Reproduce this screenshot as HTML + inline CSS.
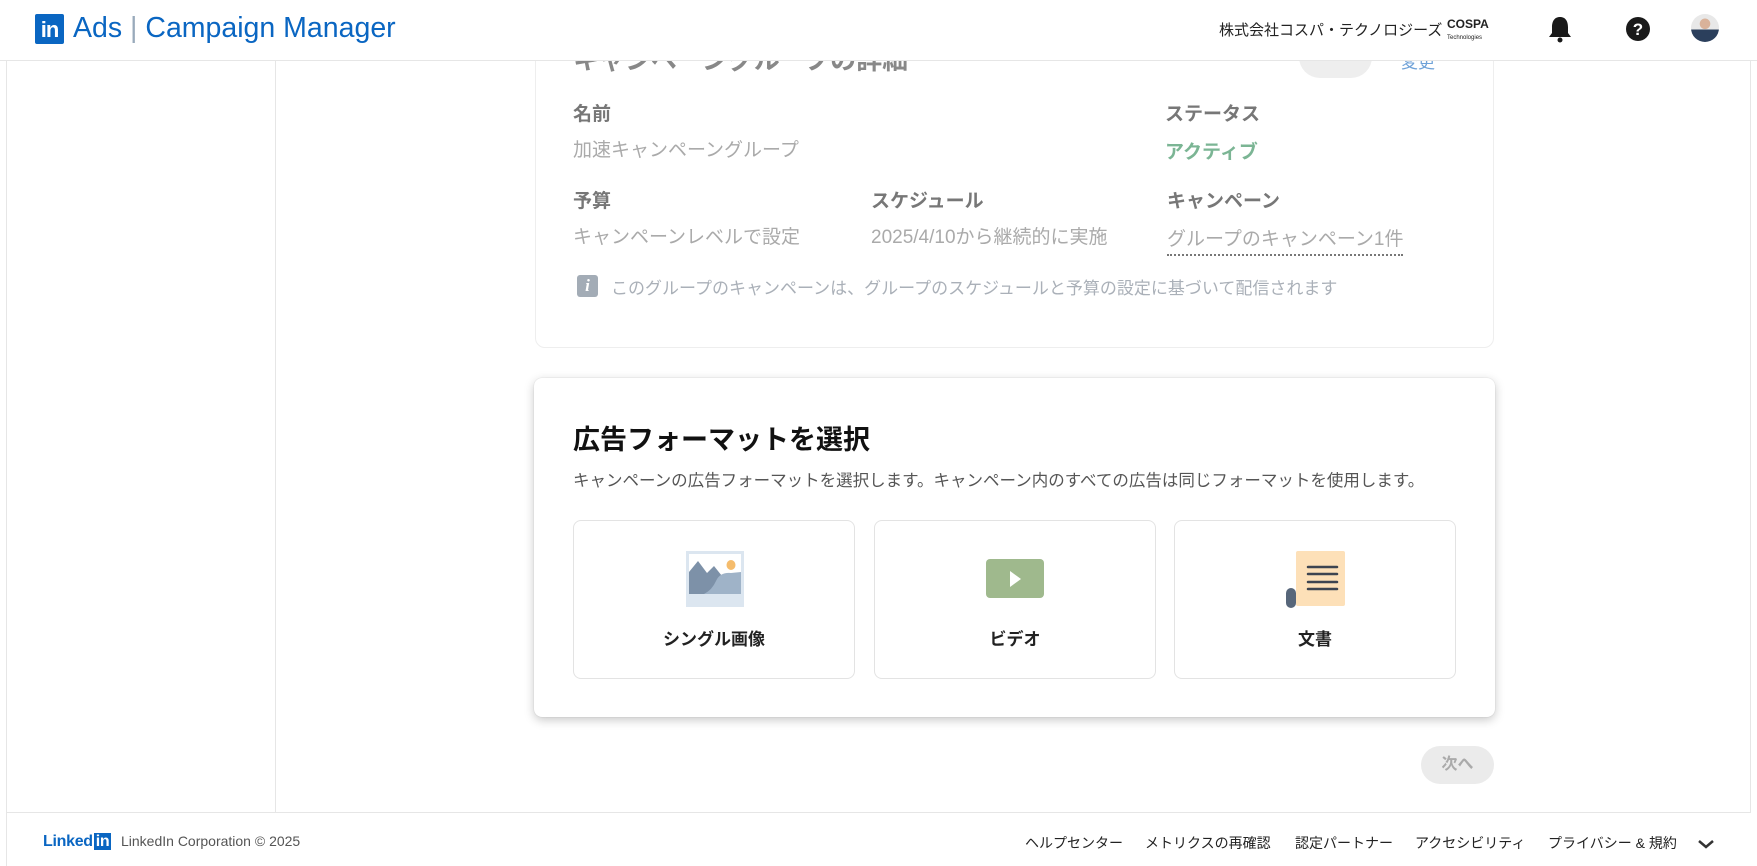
<!DOCTYPE html>
<html><head><meta charset="utf-8"><style>
*{box-sizing:border-box;margin:0;padding:0}
body{width:1757px;height:866px;overflow:hidden;background:#fff;font-family:"Liberation Sans","Noto Sans CJK JP",sans-serif;position:relative;color:#000}
.a{position:absolute}
.hdr{left:0;top:0;width:1757px;height:61px;background:#fff;border-bottom:1px solid #e6e6e6;z-index:5}
.lbl{font-size:19px;font-weight:bold;color:#777}
.val{font-size:19px;color:#aaa}
.tile{border:1px solid #e3e3e3;border-radius:8px;width:282px;height:159px;top:520px;background:#fff}
.tile .t{position:absolute;left:0;right:0;top:104px;text-align:center;font-size:17px;font-weight:bold;color:#222}
.ft{font-size:14px;color:#222;top:833px}
</style></head><body>
<div class="a" style="left:6px;top:0;width:1px;height:866px;background:#e6e6e6"></div>
<div class="a" style="left:1750px;top:0;width:1px;height:812px;background:#e6e6e6"></div>
<div class="a" style="left:275px;top:61px;width:1px;height:751px;background:#e6e6e6"></div>

<div class="a" style="left:535px;top:-20px;width:959px;height:368px;border:1px solid #eee;border-radius:10px;background:#fff"></div>
<div class="a" style="left:573px;top:40px;font-size:26px;font-weight:bold;color:#888">キャンペーングループの詳細</div>
<div class="a" style="left:1299px;top:36px;width:73px;height:42px;border-radius:21px;background:#eee"></div>
<div class="a" style="left:1401px;top:48px;font-size:17px;color:#6fa2d8">変更</div>
<div class="a lbl" style="left:573px;top:99px">名前</div>
<div class="a val" style="left:573px;top:135px">加速キャンペーングループ</div>
<div class="a lbl" style="left:1165px;top:99px">ステータス</div>
<div class="a" style="left:1165px;top:137px;font-size:19px;font-weight:bold;color:#7bb594">アクティブ</div>
<div class="a lbl" style="left:573px;top:186px">予算</div>
<div class="a val" style="left:573px;top:222px">キャンペーンレベルで設定</div>
<div class="a lbl" style="left:871px;top:186px">スケジュール</div>
<div class="a val" style="left:871px;top:222px">2025/4/10から継続的に実施</div>
<div class="a lbl" style="left:1167px;top:186px">キャンペーン</div>
<div class="a val" style="left:1167px;top:224px;border-bottom:2px dotted #777;padding-bottom:3px">グループのキャンペーン1件</div>
<div class="a" style="left:577px;top:275px;width:21px;height:22px;border-radius:3px;background:#a3acb6;color:#fff;font-style:italic;font-weight:bold;font-family:'Liberation Serif',serif;font-size:17px;text-align:center;line-height:22px">i</div>
<div class="a" style="left:611px;top:274px;font-size:17px;color:#aab0b8">このグループのキャンペーンは、グループのスケジュールと予算の設定に基づいて配信されます</div>

<div class="a" style="left:534px;top:378px;width:961px;height:339px;border-radius:8px;background:#fff;box-shadow:0 3px 10px rgba(0,0,0,.22),0 0 1px rgba(0,0,0,.2)"></div>
<div class="a" style="left:573px;top:418px;font-size:27px;font-weight:bold;color:#111">広告フォーマットを選択</div>
<div class="a" style="left:573px;top:467px;font-size:16.5px;color:#555">キャンペーンの広告フォーマットを選択します。キャンペーン内のすべての広告は同じフォーマットを使用します。</div>

<div class="a tile" style="left:573px">
<svg class="a" style="left:112px;top:30px" width="58" height="56" viewBox="0 0 58 56"><rect width="58" height="56" fill="#dce6f0"/><rect x="3" y="3" width="52" height="40" fill="#fff"/><path d="M3 43 V21 L12 10 L21 22 L28 15 L36 25 L36 43Z" fill="#7d91a8"/><path d="M18 43 Q26 39 30 30 Q34 21 45 22 L55 21 V43Z" fill="#9fb3c8"/><ellipse cx="45" cy="14" rx="4.5" ry="5" fill="#f5bc6c"/></svg>
<div class="t">シングル画像</div></div>
<div class="a tile" style="left:874px">
<svg class="a" style="left:111px;top:38px" width="58" height="40" viewBox="0 0 58 40"><rect width="58" height="39" rx="4" fill="#9fb98d"/><path d="M24 12 L35 20 L24 28Z" fill="#fff"/></svg>
<div class="t">ビデオ</div></div>
<div class="a tile" style="left:1174px">
<svg class="a" style="left:111px;top:30px" width="62" height="58" viewBox="0 0 62 58"><rect x="10" y="0" width="49" height="55" rx="2" fill="#fde0b8"/><rect x="0" y="37" width="10" height="20" rx="5" fill="#57667a"/><g stroke="#3d4450" stroke-width="2.5" stroke-linecap="round"><line x1="22" y1="16" x2="51" y2="16"/><line x1="22" y1="23" x2="51" y2="23"/><line x1="22" y1="31" x2="51" y2="31"/><line x1="22" y1="38" x2="51" y2="38"/></g></svg>
<div class="t">文書</div></div>

<div class="a" style="left:1421px;top:746px;width:73px;height:38px;border-radius:19px;background:#ebebeb;color:#aaa;font-size:16px;font-weight:bold;text-align:center;line-height:38px">次へ</div>

<div class="a" style="left:6px;top:812px;width:1745px;height:1px;background:#e6e6e6"></div>
<div class="a" style="left:43px;top:833px;font-size:16px;font-weight:bold;color:#0a66c2;letter-spacing:-0.3px">Linked<span style="background:#0a66c2;color:#fff;padding:0 2px;margin-left:1px">in</span></div>
<div class="a" style="left:121px;top:833px;font-size:14px;color:#555">LinkedIn Corporation © 2025</div>
<div class="a ft" style="left:1025px">ヘルプセンター</div>
<div class="a ft" style="left:1145px">メトリクスの再確認</div>
<div class="a ft" style="left:1295px">認定パートナー</div>
<div class="a ft" style="left:1415px">アクセシビリティ</div>
<div class="a ft" style="left:1548px">プライバシー &amp; 規約</div>
<svg class="a" style="left:1697px;top:838px" width="18" height="12" viewBox="0 0 18 12"><path d="M2 3 L9 9 L16 3" stroke="#333" stroke-width="2.5" fill="none"/></svg>

<div class="a hdr">
<div class="a" style="left:35px;top:14px;width:29px;height:30px;background:#0a66c2;border-radius:2px;color:#fff;font-weight:bold;font-size:22px;line-height:32px;text-align:center;letter-spacing:-1px">in</div>
<div class="a" style="left:73px;top:12px;font-size:28.5px;color:#0a66c2">Ads <span style="color:#9ab">|</span> Campaign Manager</div>
<div class="a" style="left:1219px;top:19px;font-size:15px;color:#222">株式会社コスパ・テクノロジーズ</div>
<div class="a" style="left:1447px;top:19px;font-size:12px;font-weight:bold;color:#222;line-height:11px">COSPA<br><span style="font-size:6px;font-weight:normal">Technologies</span></div>
<svg class="a" style="left:1547px;top:15px" width="26" height="28" viewBox="0 0 26 28"><path d="M13 2 C7 2 5 7 5 12 V18 L2 22 H24 L21 18 V12 C21 7 19 2 13 2Z" fill="#1a1a1a"/><circle cx="13" cy="25" r="2.5" fill="#1a1a1a"/></svg>
<svg class="a" style="left:1625px;top:16px" width="26" height="26" viewBox="0 0 26 26"><circle cx="13" cy="13" r="12" fill="#1a1a1a"/><text x="13" y="19" text-anchor="middle" font-family="Liberation Sans" font-weight="bold" font-size="17" fill="#fff">?</text></svg>
<div class="a" style="left:1691px;top:14px;width:28px;height:28px;border-radius:50%;background:radial-gradient(circle at 50% 35%,#d9b29a 0 22%,transparent 24%),linear-gradient(#e8e8e8 55%,#2b3f5c 56%);"></div>
</div>
</body></html>
